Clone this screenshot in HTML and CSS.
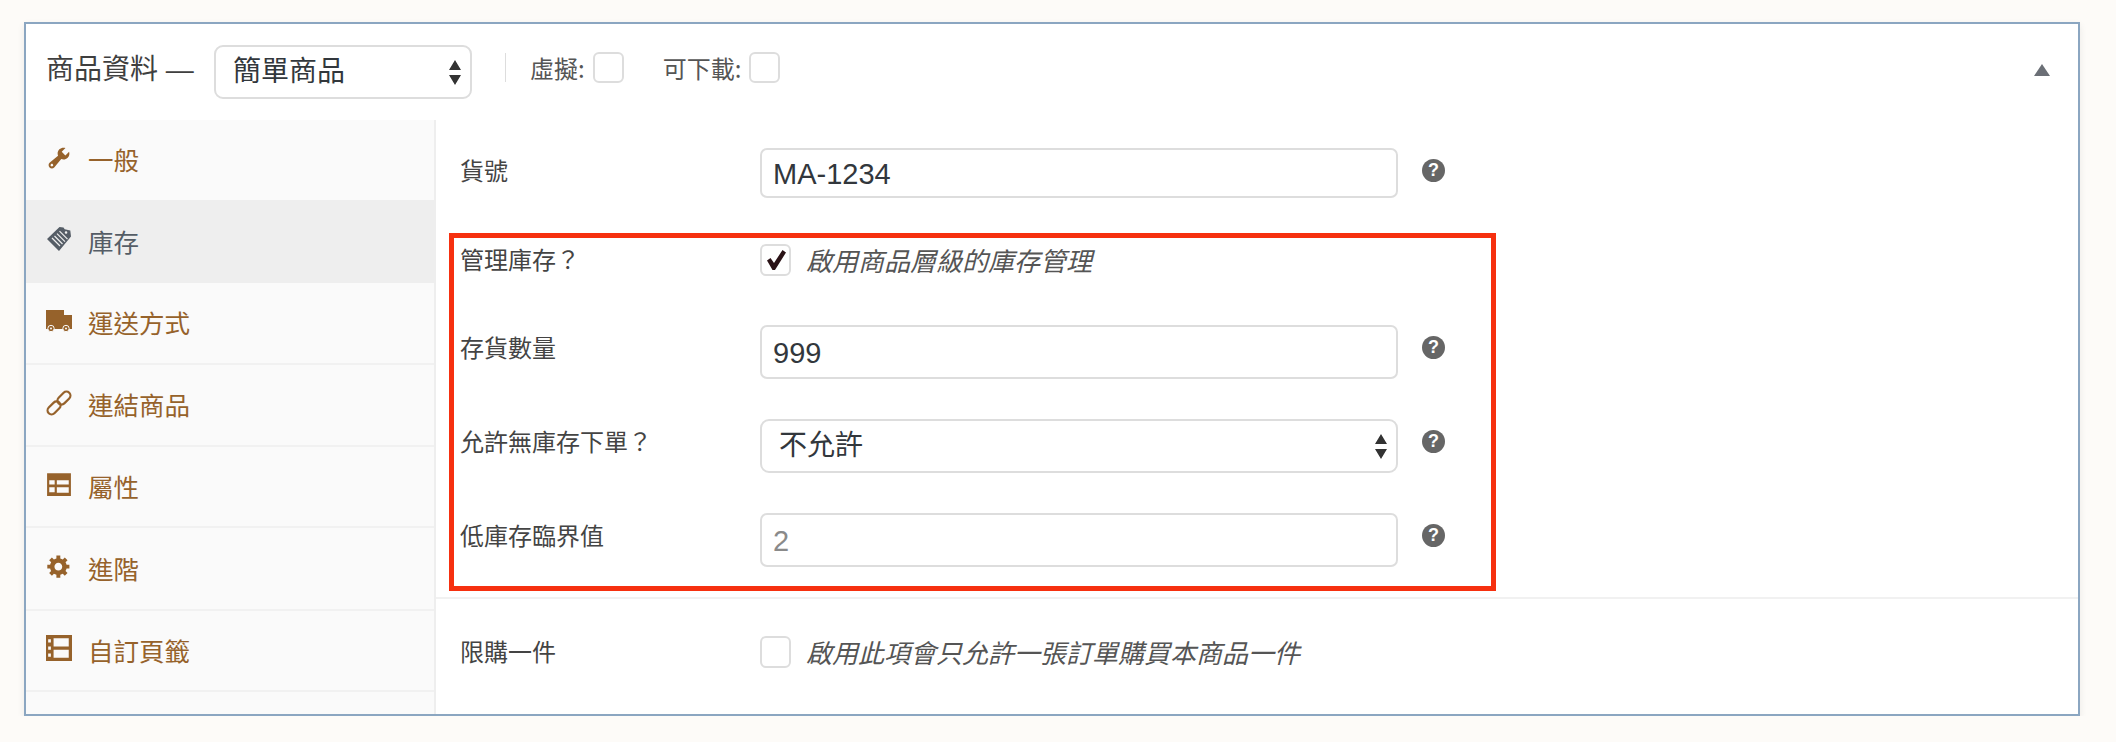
FILE: index.html
```html
<!DOCTYPE html>
<html lang="zh-Hant">
<head>
  <meta charset="UTF-8" />
  <meta name="viewport" content="width=device-width, initial-scale=1.0" />
  <title>商品資料</title>
  <link rel="stylesheet" href="styles.css">
</head>
<body>
  <div class="panel">
    <header class="panel-head">
      <span class="panel-title">商品資料 —</span>
      <select class="select select-type">
        <option>簡單商品</option>
      </select>
      <div class="type-options">
        <label class="type-option">虛擬: <input type="checkbox" class="check"></label>
        <label class="type-option">可下載: <input type="checkbox" class="check"></label>
      </div>
      <span class="collapse"></span>
    </header>

    <div class="panel-body">
      <ul class="tabs">
        <li class="tab">
          <svg class="tab-icon" viewBox="0 0 20 20"><path d="M16.68 9.77c-1.34 1.34-3.3 1.67-4.95.99l-5.41 6.52c-.99.99-2.59.99-3.58 0s-.99-2.59 0-3.58l6.52-5.41c-.68-1.65-.35-3.61.99-4.95 1.28-1.28 3.12-1.62 4.72-1.06l-2.89 2.89 2.82 2.82 2.86-2.87c.53 1.58.18 3.39-1.08 4.65zM3.81 16.21c.4.39 1.04.39 1.43 0 .4-.4.4-1.04 0-1.43-.39-.4-1.03-.4-1.43 0-.39.39-.39 1.03 0 1.43z"/></svg>
          一般
        </li>
        <li class="tab active">
          <svg class="tab-icon" viewBox="0 0 26 26"><path fill-rule="evenodd" d="M1 13 13.5 1l4 .6 1.2 1.6 5.6 1.2.7 6L13 25zM20 5.2a1.3 1.3 0 1 0 .1 2.6 1.3 1.3 0 0 0-.1-2.6z"/><path class="tag-lines" d="M6 12l8 8M8.500 10l8 8M11 7.600l8 8M13.500 5.200l8 8"/></svg>
          庫存
        </li>
        <li class="tab">
          <svg class="tab-icon" viewBox="0 0 26 22"><path d="M0 0h18v5h8v14H0z"/><g class="wheel"><circle cx="5" cy="18.500" r="3.200"/><circle cx="20" cy="18.500" r="3.200"/></g><circle class="wheel-hub" cx="5" cy="18.500" r="1"/><circle class="wheel-hub" cx="20" cy="18.500" r="1"/></svg>
          運送方式
        </li>
        <li class="tab">
          <svg class="tab-icon" viewBox="0 0 26 26"><g class="link-lines" transform="rotate(-45 13 13)"><rect x="-1.500" y="9" width="15" height="8" rx="4"/><rect x="12.500" y="9" width="15" height="8" rx="4"/></g></svg>
          連結商品
        </li>
        <li class="tab">
          <svg class="tab-icon" viewBox="0 0 24 24"><path fill-rule="evenodd" d="M1 2h22v21H1zM3 8.500v4h5v-4zM3 15v4.500h5V15zM10 8.500v4h11v-4zM10 15v5h11v-5z"/></svg>
          屬性
        </li>
        <li class="tab">
          <svg class="tab-icon" viewBox="0 0 20 20"><path d="M18 12h-2.180c-.17.7-.44 1.350-.81 1.930l1.540 1.540-2.100 2.100-1.540-1.540c-.58.36-1.230.63-1.910.79V19H8v-2.180c-.68-.16-1.330-.43-1.910-.79l-1.540 1.540-2.120-2.120 1.540-1.540c-.36-.58-.63-1.230-.79-1.910H1V9.030h2.170c.16-.7.44-1.350.8-1.940L2.430 5.550l2.100-2.100 1.540 1.540c.58-.37 1.240-.64 1.930-.81V2h3v2.180c.68.16 1.330.43 1.910.79l1.540-1.540 2.120 2.120-1.540 1.540c.36.59.64 1.240.8 1.940H18V12zm-8.500 1.500c1.660 0 3-1.340 3-3s-1.340-3-3-3-3 1.340-3 3 1.340 3 3 3z"/></svg>
          進階
        </li>
        <li class="tab">
          <svg class="tab-icon" viewBox="0 0 24 24"><path fill-rule="evenodd" d="M0 0h24v24H0zM7 3v7.500h14V3zM7 13.500V21h14v-7.500zM2 4v3h2.500V4zM2 10.500v3h2.500v-3zM2 17v3h2.500v-3z"/></svg>
          自訂頁籤
        </li>
      </ul>

      <div class="panel-main">
        <div class="field-group">
          <div class="field">
            <span class="field-label">貨號</span>
            <input class="text-input text-input-sm" type="text" value="MA-1234">
            <span class="help">?</span>
          </div>
          <div class="field">
            <span class="field-label field-label-check">管理庫存？</span>
            <input class="check check-lg" type="checkbox" checked>
            <span class="check-note">啟用商品層級的庫存管理</span>
          </div>
          <div class="field">
            <span class="field-label">存貨數量</span>
            <input class="text-input" type="text" value="999">
            <span class="help">?</span>
          </div>
          <div class="field">
            <span class="field-label">允許無庫存下單？</span>
            <select class="select select-wide">
              <option>不允許</option>
            </select>
            <span class="help">?</span>
          </div>
          <div class="field">
            <span class="field-label">低庫存臨界值</span>
            <input class="text-input" type="text" placeholder="2">
            <span class="help">?</span>
          </div>
        </div>

        <div class="field-group-last">
          <div class="field">
            <span class="field-label field-label-check">限購一件</span>
            <input class="check check-lg" type="checkbox">
            <span class="check-note">啟用此項會只允許一張訂單購買本商品一件</span>
          </div>
        </div>

        <div class="highlight"></div>
      </div>
    </div>
  </div>
</body>
</html>
```

FILE: styles.css
```css
body {
  margin: 0;
  background-color: #fdfbf8;
  font-family: "Noto Sans CJK TC", "Liberation Sans", sans-serif;
  color: #444;
}
.panel {
  margin: 22px 36px 0 24px;
  background: white;
  border: 2px solid #8ba6c1;
  box-shadow: 0 3px 7px rgba(0,0,0,0.08);
}

/* header row */
.panel-head {
  height: 96px;
  padding: 0 28px 0 20px;
  display: flex;
  align-items: center;
}
.panel-title {
  font-family: "Liberation Sans", "Noto Sans CJK TC", sans-serif;
  font-size: 28px;
  width: 168px;
  padding-bottom: 11px;
  white-space: nowrap;
  color: #3f3f3f;
}
.select {
  appearance: none;
  height: 54px;
  background: white url("data:image/svg+xml,%3Csvg xmlns='http://www.w3.org/2000/svg' viewBox='0 0 14 25'%3E%3Cpath fill='%23333' d='M7 0l6 10H1zM7 25L1 15h12z'/%3E%3C/svg%3E") no-repeat right 8px center / 14px 25px;
  border: 2px solid #ddd;
  border-radius: 9px;
  font-family: "Noto Sans CJK TC", sans-serif;
  font-size: 28px;
  color: #32373c;
  padding: 0 30px 6px 17px;
  box-sizing: border-box;
}
.select-type {
  width: 258px;
}
.select-wide {
  width: 638px;
}
.type-options {
  display: flex;
  align-items: center;
  gap: 39px;
  height: 29px;
  margin: 0 0 9px 33px;
  padding-left: 24px;
  border-left: 1px solid #ddd;
}
.type-option {
  display: flex;
  align-items: center;
  gap: 8px;
  font-size: 24px;
  color: #555;
}
.check {
  appearance: none;
  margin: 0;
  width: 31px;
  height: 31px;
  flex-shrink: 0;
  background: white;
  border: 2px solid #ddd;
  border-radius: 6px;
  box-sizing: border-box;
}
.check:checked {
  background: white url("data:image/svg+xml,%3Csvg xmlns='http://www.w3.org/2000/svg' viewBox='0 0 24 24'%3E%3Cpath fill='%232a1216' d='M3 12.500l3.500-2.500 3.500 5L18.500 2 22 4.500 11 22H8.500z'/%3E%3C/svg%3E") no-repeat center / 24px 24px;
}
.collapse {
  margin: -4px 0 0 auto;
  width: 0;
  height: 0;
  border-left: 8.5px solid transparent;
  border-right: 8.5px solid transparent;
  border-bottom: 12px solid #6b6f76;
}

/* sidebar tabs */
.panel-body {
  display: flex;
}
.tabs {
  list-style-type: none;
  margin: 0;
  padding: 0;
  width: 408px;
  flex-shrink: 0;
  background-color: #fafafa;
  border-right: 2px solid #eee;
  display: grid;
  grid-template-rows: 80px 83px 82px 82px 81px 83px 81px;
  align-content: start;
}
.tab {
  display: flex;
  align-items: center;
  gap: 16px;
  padding: 0 0 3px 20px;
  font-size: 25.500px;
  color: #96622b;
  border-bottom: 2px solid #f1f1f1;
  box-sizing: border-box;
}
.tab:first-child {
  border-bottom: none;
}
.tab.active {
  background-color: #eee;
  color: #555d66;
  border-bottom: none;
}
.tab-icon {
  width: 26px;
  height: 26px;
  margin-bottom: 2px;
  fill: currentColor;
}
.tag-lines {
  fill: none;
  stroke: #eee;
  stroke-width: 1.200;
}
.link-lines rect {
  fill: none;
  stroke: currentColor;
  stroke-width: 2.200;
}
.wheel {
  stroke: #fafafa;
  stroke-width: 1;
}
.wheel-hub {
  fill: #fafafa;
}

/* form area */
.panel-main {
  position: relative;
  flex: 1;
  padding-top: 28px;
}
.field-group {
  display: grid;
  grid-template-rows: 96px 81px 94px 94px 84px;
  border-bottom: 2px solid #f1f1f1;
}
.field-group-last {
  padding-top: 37px;
  height: 78px;
}
.field {
  display: flex;
  align-items: flex-start;
  padding-left: 24px;
}
.field-label {
  width: 300px;
  flex-shrink: 0;
  font-size: 24px;
  line-height: 44px;
  color: #444;
}
.field-label-check {
  line-height: 30px;
}
.text-input {
  width: 638px;
  height: 54px;
  box-sizing: border-box;
  background: white;
  border: 2px solid #ddd;
  border-radius: 7px;
  padding: 2px 11px 0;
  font-family: "Liberation Sans", sans-serif;
  font-size: 29px;
  color: #32373c;
}
.text-input-sm {
  height: 50px;
}
.text-input::placeholder {
  color: #8a8a8a;
}
.help {
  width: 23px;
  height: 23px;
  margin: 11px 0 0 24px;
  border-radius: 50%;
  background-color: #666;
  color: white;
  font-family: "Liberation Sans", sans-serif;
  font-size: 18px;
  font-weight: bold;
  line-height: 23px;
  text-align: center;
}
.check-lg {
  height: 32px;
}
.check-note {
  margin-left: 15px;
  font-size: 26px;
  font-style: italic;
  line-height: 31px;
  color: #555;
  white-space: nowrap;
}

/* red annotation drawn over the stock fields */
.highlight {
  position: absolute;
  left: 13px;
  top: 113px;
  width: 1047px;
  height: 358px;
  box-sizing: border-box;
  border: 5px solid #f6300f;
}
```
